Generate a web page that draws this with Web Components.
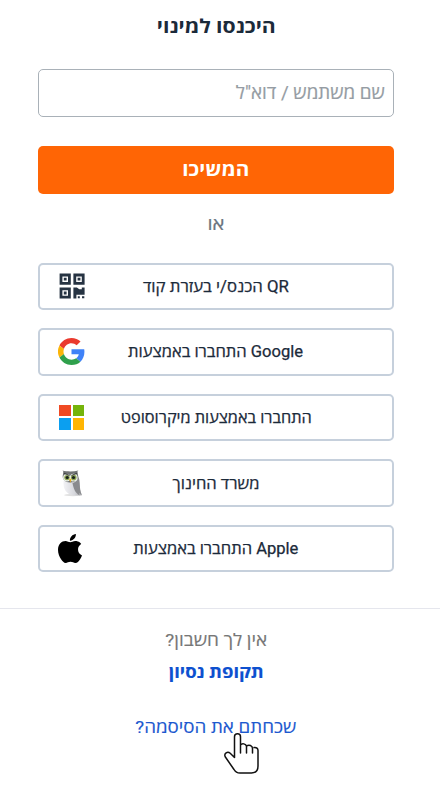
<!DOCTYPE html>
<html lang="he">
<head>
<meta charset="utf-8">
<title>היכנסו למינוי</title>
<style>
html,body{margin:0;background:#fff}
body{font-family:Roboto,"Open Sans","Liberation Sans",sans-serif;color:#1b2a3a}
</style>
</head>
<body>
<login-page></login-page>
<script>
const define=(name,html)=>customElements.define(name,class extends HTMLElement{
  constructor(){
    super();
    const t=document.createElement('template');
    t.innerHTML=html;
    this.attachShadow({mode:'open'}).append(t.content.cloneNode(true));
  }
});

/* A single line whose glyphs are widened so it fills the "w" width. */
customElements.define('text-line',class extends HTMLElement{
  constructor(){
    super();
    this.attachShadow({mode:'open'}).innerHTML='<style>:host{display:flex;justify-content:center;white-space:nowrap}span{display:block;flex:none}</style><span><slot></slot></span>';
  }
  connectedCallback(){
    const w=parseFloat(this.getAttribute('w')),s=this.shadowRoot.querySelector('span');
    const natural=s.getBoundingClientRect().width;
    if(w&&natural){
      this.style.width=w+'px';
      s.style.transform='scaleX('+w/natural+')';
    }
  }
});

define('text-field',`<style>
:host{display:flex;box-sizing:border-box;height:48px;align-items:center;padding:0 8px 2px;border:1.5px solid #a9b1b8;border-radius:5px;background:#fff;color:#959ca3;font-size:18px;direction:rtl;-webkit-text-stroke:.2px}
</style><slot></slot>`);

define('primary-button',`<style>
:host{display:flex;box-sizing:border-box;height:48px;align-items:center;justify-content:center;padding-bottom:1px;border-radius:5px;background:#ff6505;color:#fff;font-weight:700;font-size:19px;direction:rtl}
</style><slot></slot>`);

define('provider-button',`<style>
:host{display:grid;box-sizing:border-box;height:47.6px;grid-template-columns:62px 1fr 62px;align-items:center;border:2px solid #c6d0dc;border-radius:5px;background:#fff;font-size:15.6px;font-weight:400;direction:ltr;-webkit-text-stroke:.25px}
.icon{display:flex;justify-content:center;align-items:center;padding-left:1px}
.label{display:flex;justify-content:center;padding-bottom:1px}
</style><div class="icon"><slot name="icon"></slot></div><div class="label"><slot></slot></div>`);

define('icon-qr',`<style>:host,svg{display:block}</style>
<svg width="26" height="26" viewBox="0 0 26 26"><g fill="none" stroke="#263342" stroke-width="2.8"><path d="M2 2h8.4v8.4H2zM15.8 2h8.4v8.4h-8.4zM2 15.8h8.4v8.4H2z"/></g><g fill="#263342"><path d="M4.8 4.8h2.8v2.8H4.8zM18.6 4.8h2.8v2.8h-2.8zM4.8 18.6h2.8v2.8H4.8zM14.4 14.4h3.5l2.4 1.800h2.500v-1.800h2.800v7.400h-8.200v3.800h-3zM18.800 23.200h2v2h-2zM23 23.200h2.300v2H23z"/></g></svg>`);

define('icon-google',`<style>:host,svg{display:block}</style>
<svg width="27" height="27" viewBox="0 0 48 48"><path fill="#EA3A2E" d="M24 9.5c3.54 0 6.71 1.22 9.21 3.6l6.85-6.85C35.9 2.38 30.47 0 24 0 14.62 0 6.51 5.38 2.56 13.22l7.98 6.19C12.43 13.72 17.74 9.5 24 9.5z"/><path fill="#3F82F8" d="M46.98 24.55c0-1.57-.15-3.09-.38-4.55H24v9.02h12.94c-.58 2.96-2.26 5.48-4.78 7.18l7.73 6c4.51-4.18 7.09-10.36 7.09-17.65z"/><path fill="#FBB50A" d="M10.53 28.59a14.5 14.5 0 0 1 0-9.18l-7.98-6.19a24 24 0 0 0 0 21.56z"/><path fill="#2FA04C" d="M24 48c6.48 0 11.93-2.13 15.89-5.81l-7.73-6c-2.15 1.45-4.92 2.3-8.16 2.3-6.26 0-11.57-4.22-13.47-9.91l-7.98 6.19C6.51 42.62 14.62 48 24 48z"/></svg>`);

define('icon-microsoft',`<style>:host{display:grid;width:25px;height:25px;grid-template:1fr 1fr/1fr 1fr;gap:2px}i:nth-of-type(1){background:#f04a23}i:nth-of-type(2){background:#75b40b}i:nth-of-type(3){background:#0b9ff0}i:nth-of-type(4){background:#ffb503}</style><i></i><i></i><i></i><i></i>`);

define('icon-owl',`<style>:host,svg{display:block}</style>
<svg width="22" height="27" viewBox="0 0 22 27">
<defs><linearGradient id="b"><stop offset="0" stop-color="#f3f3f6"/><stop offset=".6" stop-color="#d6d7dc"/><stop offset="1" stop-color="#a6a7aa"/></linearGradient></defs>
<ellipse cx="12" cy="25" rx="9" ry="1.200" fill="#e0e0e0"/>
<path d="M2.500 11C2 19 5 24 12.500 25.500l8.500-.2C18.500 22 19 15 17.500 9z" fill="url(#b)"/>
<path d="M11.500 13c3-.5 5.500-3 5.500-7 3 5 .5 12 4 19l-3-2 .5 2.500c-4.500-3-6-7-7-12.500z" fill="#8a8b8e"/>
<path d="M1.500 .6c4.500 1.200 11 1.200 16 0-1.500 1-1.500 2-.5 4 1 5-2 8-8 8-5 0-8-3-7.200-7.500C2.500 3 3 2 1.500 .6z" fill="#707374"/>
<circle cx="5.800" cy="7.700" r="3.700" fill="#e9eee5"/><circle cx="12.700" cy="7.700" r="3.900" fill="#e9eee5"/>
<circle cx="6" cy="7.600" r="2.700" fill="#8da457"/><circle cx="12.700" cy="7.600" r="2.800" fill="#8da457"/>
<circle cx="6.200" cy="7.500" r="1.600" fill="#17201b"/><circle cx="12.500" cy="7.500" r="1.600" fill="#17201b"/>
<path d="M2.500 3l6 2.500M16.500 3l-6 2.500" stroke="#3b3e3e"/>
<path d="M8.100 9.500l1.200-1 1.200 1-1 3.300z" fill="#e9ad23"/></svg>`);

define('icon-apple',`<style>:host{display:block;padding:0 3px 0 0}svg{display:block}</style>
<svg width="24" height="29" viewBox="0 0 814 1000" preserveAspectRatio="none"><path d="M788.100 340.900c-5.800 4.500-108.200 62.200-108.200 190.500 0 148.400 130.300 200.900 134.200 202.200-.6 3.200-20.700 71.900-68.700 141.900-42.800 61.600-87.500 123.100-155.500 123.100s-85.500-39.500-164-39.500c-76.500 0-103.700 40.800-165.900 40.800s-105.600-57-155.500-127C46.700 790.700 0 663 0 541.800c0-194.400 126.400-297.500 250.800-297.500 66.100 0 121.200 43.400 162.700 43.400 39.500 0 101.100-46 176.300-46 28.500 0 130.900 2.600 198.300 99.200zM554.100 159.400c31.100-36.900 53.100-88.100 53.100-139.300 0-7.100-.6-14.300-1.900-20.100-50.600 1.900-110.800 33.700-147.100 75.800-28.500 32.400-55.100 83.600-55.100 135.500 0 7.800 1.300 15.600 1.900 18.100 3.200.6 8.400 1.300 13.600 1.300 45.400 0 102.500-30.400 135.500-71.300z"/></svg>`);

define('hand-cursor',`<style>:host,svg{display:block}</style>
<svg width="36" height="43" viewBox="0 0 36 43"><path d="M11.500 25.500V4.800a3 3 0 0 1 6 0V21M17.500 13c1.500-2 5.500-1.500 6 1.500V21M23.500 14c2.500-1.500 6-.5 6 2.500V21M31 15.500c2.500-.5 4 1 4 3V34c0 4.500-2.500 7-6.500 7H17c-3 0-4.700-1.200-6-3.500L2.200 24.800c-1.500-3.500 2.300-6 5-3.600l4.300 4.300" fill="#fff" stroke="#111" stroke-width="1.500" stroke-linejoin="round" stroke-linecap="round"/></svg>`);

define('login-page',`<style>
:host{display:block;width:440px;height:791px;overflow:hidden}
.form{display:flex;flex-direction:column;box-sizing:border-box;padding:0 46px 0 38px;height:607.500px}
.title{display:flex;justify-content:center;direction:rtl;font-size:19px;font-weight:700;line-height:28px;padding:13px 0 28px}
.or{display:flex;justify-content:center;direction:rtl;font-size:16.500px;line-height:24px;color:#6b7580;margin:19px 0 26px;-webkit-text-stroke:.2px}
primary-button{margin-top:28.500px}
.providers{display:flex;flex-direction:column;gap:18px}
.foot{display:flex;flex-direction:column;align-items:center;border-top:1.500px solid #e5e6ed;padding:19px 8px 0 0;direction:rtl;font-size:17.200px;line-height:24px;color:#777;-webkit-text-stroke:.15px}
.trial{color:#0d50cf;font-weight:700;margin-top:8px}
.forgot{position:relative;color:#1c59cf;margin-top:31px}
hand-cursor{position:absolute;left:87px;top:17px}
</style>
<div class="form">
<div class="title"><text-line w="119">היכנסו למינוי</text-line></div>
<text-field><text-line w="149">שם משתמש / דוא"ל</text-line></text-field>
<primary-button><text-line w="67">המשיכו</text-line></primary-button>
<div class="or"><text-line w="17">או</text-line></div>
<div class="providers">
<provider-button><icon-qr slot="icon"></icon-qr><text-line w="146">הכנס/י בעזרת קוד QR</text-line></provider-button>
<provider-button><icon-google slot="icon"></icon-google><text-line w="175">התחברו באמצעות Google</text-line></provider-button>
<provider-button><icon-microsoft slot="icon"></icon-microsoft><text-line w="191">התחברו באמצעות מיקרוסופט</text-line></provider-button>
<provider-button><icon-owl slot="icon"></icon-owl><text-line w="87">משרד החינוך</text-line></provider-button>
<provider-button><icon-apple slot="icon"></icon-apple><text-line w="165">התחברו באמצעות Apple</text-line></provider-button>
</div>
</div>
<div class="foot">
<text-line w="102">אין לך חשבון?</text-line>
<text-line class="trial" w="95">תקופת נסיון</text-line>
<div class="forgot"><text-line w="161">שכחתם את הסיסמה?</text-line><hand-cursor></hand-cursor></div>
</div>`);
</script>
</body>
</html>
